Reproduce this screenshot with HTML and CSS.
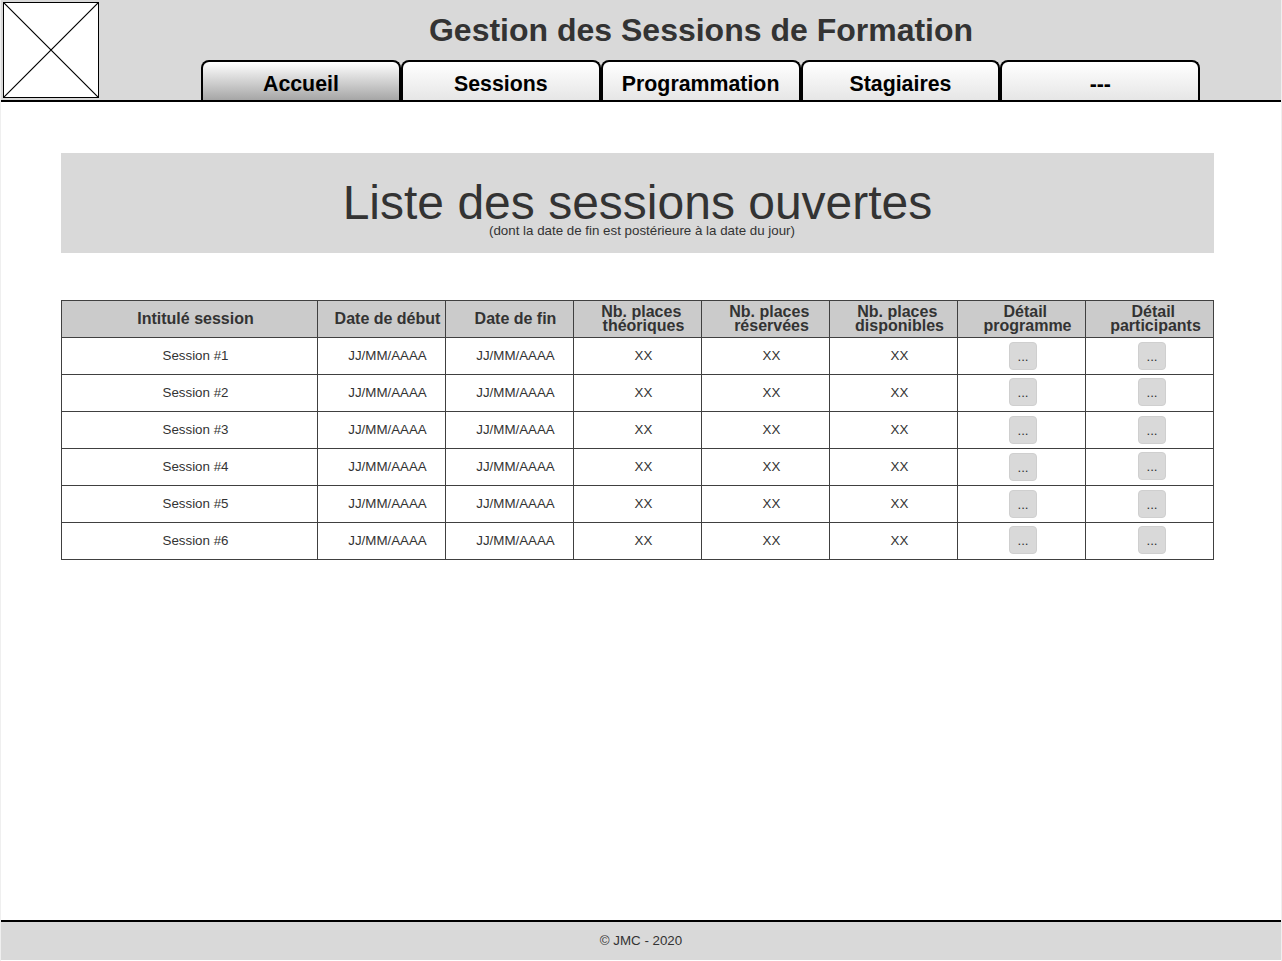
FILE: index.html
```html
<!DOCTYPE html>
<html lang="fr">
<head>
	<meta charset="utf-8">
	<title>Gestion des Sessions de Formation</title>
	<link rel="stylesheet" href="styles.css">
</head>
<body>
	<div class="page">
		<header class="topBar">
			<div class="logo">
				<svg width="94" height="94" viewBox="0 0 94 94">
					<path d="M0 0L94 94M94 0L0 94" stroke="#000" stroke-width="1.2" fill="none"/>
				</svg>
			</div>
			<div class="topRight">
				<div class="appTitle">Gestion des Sessions de Formation</div>
				<nav class="tabs">
					<a class="tab active">Accueil</a>
					<a class="tab">Sessions</a>
					<a class="tab">Programmation</a>
					<a class="tab">Stagiaires</a>
					<a class="tab">---</a>
				</nav>
			</div>
		</header>
		<main class="content">
			<div class="banner">
				<h1>Liste des sessions ouvertes</h1>
				<div class="bannerSub">(dont la date de fin est postérieure à la date du jour)</div>
			</div>
			<table class="sessions">
				<thead>
					<tr>
						<th>Intitulé session</th>
						<th>Date de début</th>
						<th>Date de fin</th>
						<th>Nb. places&nbsp;<br>théoriques</th>
						<th>Nb. places&nbsp;<br>réservées</th>
						<th>Nb. places&nbsp;<br>disponibles</th>
						<th>Détail&nbsp;<br>programme</th>
						<th>Détail&nbsp;<br>participants</th>
					</tr>
				</thead>
				<tbody>
					<tr><td>Session #1</td><td>JJ/MM/AAAA</td><td>JJ/MM/AAAA</td><td>XX</td><td>XX</td><td>XX</td><td class="cellProg"><button class="btnMore">...</button></td><td class="cellPart"><button class="btnMore">...</button></td></tr>
					<tr><td>Session #2</td><td>JJ/MM/AAAA</td><td>JJ/MM/AAAA</td><td>XX</td><td>XX</td><td>XX</td><td class="cellProg"><button class="btnMore btnHigh">...</button></td><td class="cellPart"><button class="btnMore btnHigh">...</button></td></tr>
					<tr><td>Session #3</td><td>JJ/MM/AAAA</td><td>JJ/MM/AAAA</td><td>XX</td><td>XX</td><td>XX</td><td class="cellProg"><button class="btnMore">...</button></td><td class="cellPart"><button class="btnMore">...</button></td></tr>
					<tr><td>Session #4</td><td>JJ/MM/AAAA</td><td>JJ/MM/AAAA</td><td>XX</td><td>XX</td><td>XX</td><td class="cellProg"><button class="btnMore">...</button></td><td class="cellPart"><button class="btnMore btnHigh">...</button></td></tr>
					<tr><td>Session #5</td><td>JJ/MM/AAAA</td><td>JJ/MM/AAAA</td><td>XX</td><td>XX</td><td>XX</td><td class="cellProg"><button class="btnMore">...</button></td><td class="cellPart"><button class="btnMore">...</button></td></tr>
					<tr><td>Session #6</td><td>JJ/MM/AAAA</td><td>JJ/MM/AAAA</td><td>XX</td><td>XX</td><td>XX</td><td class="cellProg"><button class="btnMore btnHigh">...</button></td><td class="cellPart"><button class="btnMore btnHigh">...</button></td></tr>
				</tbody>
			</table>
		</main>
		<footer class="bottomBar">© JMC - 2020</footer>
	</div>
</body>
</html>
```
FILE: styles.css
```css
html, body {
	margin: 0;
	padding: 0;
	background-color: white;
}
.page {
	box-sizing: border-box;
	height: 961px;
	display: flex;
	flex-direction: column;
	border-left: 1px solid #efefef;
	border-right: 1px solid #efefef;
	font-family: "Liberation Sans", Arial, sans-serif;
	color: #333;
}
.topBar {
	box-sizing: border-box;
	height: 102px;
	display: flex;
	background-color: #d9d9d9;
	border-bottom: 2px solid black;
}
.logo {
	width: 94px;
	height: 94px;
	margin: 2px 0 0 2px;
	border: 1px solid black;
	background-color: white;
	line-height: 0;
}
.topRight {
	flex: 1;
	display: flex;
	flex-direction: column;
	padding-left: 102px;
}
.appTitle {
	width: 1000px;
	height: 60px;
	line-height: 60px;
	text-align: center;
	font-size: 32px;
	font-weight: bold;
}
.tabs {
	display: flex;
}
.tab {
	box-sizing: border-box;
	width: 199.85px;
	height: 40px;
	line-height: 44px;
	text-align: center;
	font-size: 21.33px;
	font-weight: bold;
	color: black;
	border: 2px solid black;
	border-bottom: 0 none;
	border-radius: 8px 8px 0 0;
	background: linear-gradient(to bottom, white, #e6e6e6);
}
.tab.active {
	background: linear-gradient(to bottom, white, #a6a6a6);
}
.content {
	flex: 1;
	padding: 51px 67px 0 60px;
}
.banner {
	box-sizing: border-box;
	height: 100px;
	padding-top: 25px;
	background-color: #d9d9d9;
	text-align: center;
}
.banner h1 {
	margin: 0;
	height: 46px;
	line-height: 50px;
	font-size: 48px;
	font-weight: normal;
}
.bannerSub {
	padding-left: 9px;
	font-size: 13.33px;
	line-height: 14px;
}
.sessions {
	margin-top: 47px;
	width: 1153px;
	table-layout: fixed;
	border-collapse: collapse;
	text-align: center;
	font-size: 13.33px;
}
.sessions th, .sessions td {
	box-sizing: border-box;
	height: 37px;
	padding: 0 0 2px 12px;
	border: 1px solid #404040;
}
.sessions th {
	padding-bottom: 1px;
	background-color: #cbcbcb;
	font-size: 16px;
	line-height: 14px;
}
.sessions th:first-child {
	width: 256px;
}
.sessions th:not(:first-child) {
	width: 128px;
}
.sessions td.cellProg {
	padding: 0 0 0 3px;
}
.sessions td.cellPart {
	padding: 0 0 0 5px;
}
.btnMore {
	width: 28px;
	height: 28px;
	padding: 0;
	display: inline-block;
	vertical-align: middle;
	font-family: inherit;
	font-size: 13.33px;
	color: #333;
	background-color: #d9d9d9;
	border: 1px solid #cfcfcf;
	border-radius: 4px;
}
.btnHigh {
	margin-top: -2px;
}
.bottomBar {
	box-sizing: border-box;
	height: 40px;
	margin-bottom: 1px;
	line-height: 38px;
	text-align: center;
	font-size: 13.33px;
	background-color: #d9d9d9;
	border-top: 2px solid black;
}
```
